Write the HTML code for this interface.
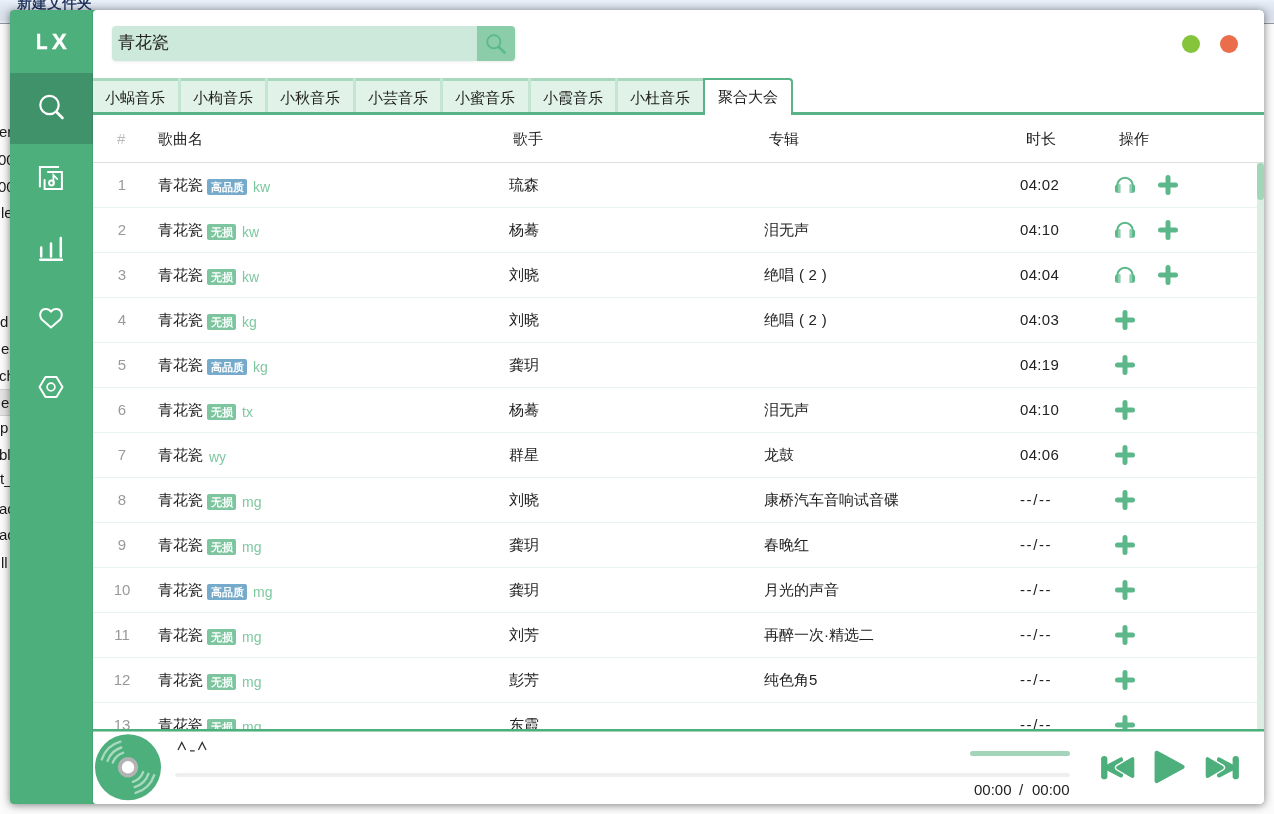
<!DOCTYPE html>
<html><head><meta charset="utf-8"><style>
*{box-sizing:border-box}
html,body{margin:0;padding:0;width:1274px;height:814px;overflow:hidden;background:#fbfbfb;font-family:"Liberation Sans",sans-serif;}
.strip{will-change:transform;position:absolute;left:0;top:0;width:1274px;height:24px;background:linear-gradient(#ebf1f9 0px,#e3eaf4 4px,#dce3ee 12px,#d9e0eb 20px,#e4e9f0 22px,#e4e9f0 23px);border-bottom:1px solid #8f98a4}
.strip .t{position:absolute;left:17px;top:-6px;font-size:15px;line-height:17px;color:#0e2450;-webkit-text-stroke:0.3px #0e2450}
.lbg{position:absolute;left:0;top:24px;width:12px;height:780px;background:linear-gradient(90deg,#f4f4f4,#e8e8e8 6px,#c9c9c9 10px)}
.frag{will-change:transform;position:absolute;font-size:15px;color:#1a1a1a;line-height:20px}
.selrow{position:absolute;left:0;top:389px;width:12px;height:27px;background:#e4e4e4;border-top:1px solid #d0d0d0;border-bottom:1px solid #d0d0d0}
.rbg{position:absolute;left:1264px;top:24px;width:10px;height:790px;background:linear-gradient(90deg,#bdbdbd,#e6e6e6 5px,#f5f5f5 10px)}
.bbg{position:absolute;left:0;top:804px;width:1274px;height:10px;background:linear-gradient(#c4c4c4,#e9e9e9 5px,#f8f8f8 10px)}
#win{position:absolute;left:10px;top:10px;width:1254px;height:794px;background:#4daf7c;border-radius:4px;overflow:hidden;box-shadow:0 1px 9px rgba(0,0,0,.5);will-change:transform}
.logo{position:absolute;left:0;top:0;width:83px;height:63px;color:#fff;font-weight:bold;font-size:22px;line-height:63px;-webkit-text-stroke:0.4px #fff}
.nav{position:absolute;left:0;width:83px;height:70px}
.nav.act{background:#40926a}
.nav svg{position:absolute;left:0;top:0}
#main{position:absolute;left:83px;top:0;width:1171px;height:794px;background:#fff;border-radius:4px;overflow:hidden}
/* coordinates inside main are page coords minus (93,10); use wrapper offset */
.pg{position:absolute;left:-93px;top:-10px;width:1274px;height:814px}
.sinput{position:absolute;left:112px;top:26px;width:365px;height:35px;background:#cde9db;border-radius:4px 0 0 4px;box-shadow:0 1px 3px rgba(0,0,0,.08);font-size:17px;color:#222;line-height:34px;padding-left:6px}
.sbtn{position:absolute;left:477px;top:26px;width:38px;height:35px;background:#8bcda8;border-radius:0 4px 4px 0;box-shadow:1px 1px 3px rgba(0,0,0,.08)}
.dot{position:absolute;top:35px;width:18px;height:18px;border-radius:50%}
.tabs{position:absolute;left:93px;top:78px;width:1171px;height:36px}
.tab{position:absolute;top:78px;height:34px;background:#e1f2e8;border-top:3px solid #aad8bf;font-size:15px;color:#222;text-align:center;line-height:33px}
.tsep{position:absolute;top:78px;width:3px;height:34px;background:#c5e5d3}
.tabline{position:absolute;left:93px;top:112px;width:1171px;height:3px;background:#5ab387}
.tact{position:absolute;left:703px;top:78px;width:90px;height:37px;background:#fff;border:2px solid #5ab387;border-bottom:none;border-radius:0 4px 0 0;font-size:15px;color:#222;text-align:center;line-height:33px}
.th{position:absolute;top:129px;font-size:15px;color:#222;line-height:20px}
.hline{position:absolute;left:93px;top:162px;width:1171px;height:1px;background:#dedede}
.row{position:absolute;left:93px;width:1164px;height:45px}
.rl{position:absolute;left:0;top:0;width:1164px;height:1px;background:#e8f3ee}
.c{position:absolute;top:0px;height:45px;line-height:45px;font-size:15px;color:#222;white-space:nowrap}
.num{left:0;width:58px;text-align:center;color:#999;padding-left:0}
.name{left:65px}
.singer{left:416px}
.album{left:671px}
.dur{left:927px}
.badge{display:inline-block;vertical-align:top;margin-top:17px;margin-left:4px;height:16px;line-height:16px;font-size:11px;font-weight:bold;color:#fff;border-radius:2px;padding:0 3.5px}
.bq{background:#76aacb}
.bl{background:#7cc59e}
.src{font-size:14px;color:#7ec8a0;margin-left:6px;display:inline-block;vertical-align:top;margin-top:2.5px}
.op{position:absolute;top:13px;margin-left:-93px}
.op svg{display:block}
.sbar{position:absolute;left:1257px;top:163px;width:7px;height:566px;background:#dceee4}
.sthumb{position:absolute;left:1257px;top:163px;width:7px;height:37px;background:#a3d6b9;border-radius:4px}
.player{position:absolute;left:93px;top:729px;width:1171px;height:75px;background:#fff;border-top:2px solid #4daf7c;box-shadow:inset 0 1px 0 rgba(77,175,124,.55)}
.ptxt{position:absolute;left:177px;top:737px;font-size:15px;color:#333}
.prog{position:absolute;left:175px;top:773px;width:895px;height:4px;background:#efefef;border-radius:2px}
.vol{position:absolute;left:970px;top:751px;width:100px;height:5px;background:#a3d5bb;border-radius:3px}
.time{position:absolute;left:974px;top:781px;font-size:15px;color:#222;line-height:18px}
</style></head><body>
<div class="strip"><div class="t">新建文件夹</div></div>
<div class="selrow"></div>
<div class="frag" style="top:121.8px;left:-1.5px">er</div><div class="frag" style="top:150.2px;left:-2.5px">00</div><div class="frag" style="top:177.2px;left:-2.5px">00</div><div class="frag" style="top:203.2px;left:0.5px">le</div><div class="frag" style="top:312.2px;left:0.3px">d</div><div class="frag" style="top:338.8px;left:1px">e</div><div class="frag" style="top:365.6px;left:-1.5px">ch</div><div class="frag" style="top:392.8px;left:1px">e</div><div class="frag" style="top:418.2px;left:0px">p</div><div class="frag" style="top:444.8px;left:-1px">bl</div><div class="frag" style="top:468.8px;left:0px">t_</div><div class="frag" style="top:499.4px;left:-1px">ac</div><div class="frag" style="top:525.3px;left:-1px">ac</div><div class="frag" style="top:552.6px;left:0.5px">ll</div>

<div id="win">
 <div class="logo"><span style="position:absolute;left:26px;top:0;display:inline-block;transform:scaleX(.86);transform-origin:0 0">L</span><span style="position:absolute;left:42px;top:0">X</span></div>
 <div class="nav act" style="top:63px;height:71px"><svg width="83" height="70" viewBox="0 0 83 70"><circle cx="39.5" cy="32" r="9.2" fill="none" stroke="#fff" stroke-width="2.2"/><path d="M46.5 39 L52.5 45" stroke="#fff" stroke-width="2.6" stroke-linecap="round"/></svg></div>
 <div class="nav" style="top:133px"><svg width="83" height="70" viewBox="0 0 83 70"><path d="M29.9 43.5 V23.9 H48.2" fill="none" stroke="#fff" stroke-width="2" stroke-linecap="round"/><path d="M34.6 37 V46 H51.9 V28.9 H38" fill="none" stroke="#fff" stroke-width="2" stroke-linecap="round"/><circle cx="41.5" cy="40" r="2.4" fill="none" stroke="#fff" stroke-width="2"/><path d="M43.4 40 V32 L47.2 36" fill="none" stroke="#fff" stroke-width="1.8" stroke-linecap="round"/></svg></div>
 <div class="nav" style="top:203px"><svg width="83" height="70" viewBox="0 0 83 70"><path d="M31.2 34.5V43.5M41 30.5V43.5M50.8 25V43.5M30.3 46.7H51.9" fill="none" stroke="#fff" stroke-width="2.5" stroke-linecap="round"/></svg></div>
 <div class="nav" style="top:273px"><svg width="83" height="70" viewBox="0 0 83 70"><path d="M41 44.6 L33 37.6 C28.2 33.3 30 26 35.8 25.9 C38.2 25.85 39.9 27.2 41 28.8 C42.1 27.2 43.8 25.85 46.2 25.9 C52 26 53.8 33.3 49 37.6 Z" fill="none" stroke="#fff" stroke-width="2" stroke-linejoin="round"/></svg></div>
 <div class="nav" style="top:343px"><svg width="83" height="70" viewBox="0 0 83 70"><path d="M35.5 24 H46.5 L52.5 34 L46.5 44 H35.5 L29.5 34 Z" fill="none" stroke="#fff" stroke-width="2" stroke-linejoin="round"/><circle cx="41" cy="34" r="3.9" fill="none" stroke="#fff" stroke-width="1.7"/></svg></div>
 <div style="position:absolute;left:82px;top:0;width:1px;height:794px;background:rgba(0,0,0,.07)"></div>
 <div id="main"><div class="pg">
  <div class="sinput">青花瓷</div>
  <div class="sbtn"><svg width="38" height="35" viewBox="0 0 38 35"><circle cx="16.8" cy="15.8" r="6.6" fill="none" stroke="#5cb98a" stroke-width="1.8"/><path d="M21.8 21 L27.5 26.5" stroke="#5cb98a" stroke-width="2.6" stroke-linecap="round"/></svg></div>
  <div class="dot" style="left:1181.5px;background:#85c43b"></div>
  <div class="dot" style="left:1220px;background:#ea6e4b"></div>
  <div class="tab" style="left:93.0px;width:84.5px">小蜗音乐</div><div class="tsep" style="left:177.5px"></div><div class="tab" style="left:180.5px;width:84.5px">小枸音乐</div><div class="tsep" style="left:265.0px"></div><div class="tab" style="left:268.0px;width:84.5px">小秋音乐</div><div class="tsep" style="left:352.5px"></div><div class="tab" style="left:355.5px;width:84.5px">小芸音乐</div><div class="tsep" style="left:440.0px"></div><div class="tab" style="left:443.0px;width:84.5px">小蜜音乐</div><div class="tsep" style="left:527.5px"></div><div class="tab" style="left:530.5px;width:84.5px">小霞音乐</div><div class="tsep" style="left:615.0px"></div><div class="tab" style="left:618.0px;width:84.5px">小杜音乐</div><div class="tsep" style="left:702.5px"></div>
  <div class="tabline"></div>
  <div class="tact">聚合大会</div>
  <div class="th" style="left:117px;color:#bbb">#</div>
  <div class="th" style="left:158px">歌曲名</div>
  <div class="th" style="left:513px">歌手</div>
  <div class="th" style="left:769px">专辑</div>
  <div class="th" style="left:1026px">时长</div>
  <div class="th" style="left:1119px">操作</div>
  <div class="hline"></div>
  <div class="row" style="top:162px">
<div class="c num">1</div>
<div class="c name">青花瓷<span class="badge bq">高品质</span><span class="src">kw</span></div>
<div class="c singer">琉森</div>
<div class="c album"></div>
<div class="c dur" style="letter-spacing:0.3px">04:02</div>
<div class="op" style="left:1114px"><svg class="hp" width="22" height="19" viewBox="0 0 22 19"><path d="M3.3 10.5 A7.7 7.7 0 0 1 18.7 10.5" fill="none" stroke="#5cb88a" stroke-width="2.1"/><path d="M1 11.5 Q1 9.5 3 9.5 H6.3 V17.8 H3 Q1 17.8 1 15.8 Z" fill="#5cb88a"/><rect x="3.9" y="9.5" width="2.4" height="8.3" fill="#8fd0ad"/><path d="M21 11.5 Q21 9.5 19 9.5 H15.7 V17.8 H19 Q21 17.8 21 15.8 Z" fill="#5cb88a"/><rect x="15.7" y="9.5" width="2.4" height="8.3" fill="#8fd0ad"/></svg></div><div class="op" style="left:1158px"><svg class="pl" width="20" height="20" viewBox="0 0 20 20"><path d="M10 2.5V17.5M2.5 10H17.5" stroke="#5cb88a" stroke-width="5" stroke-linecap="round"/></svg></div>
</div>
<div class="row" style="top:207px"><div class="rl"></div>
<div class="c num">2</div>
<div class="c name">青花瓷<span class="badge bl">无损</span><span class="src">kw</span></div>
<div class="c singer">杨蓦</div>
<div class="c album">泪无声</div>
<div class="c dur" style="letter-spacing:0.3px">04:10</div>
<div class="op" style="left:1114px"><svg class="hp" width="22" height="19" viewBox="0 0 22 19"><path d="M3.3 10.5 A7.7 7.7 0 0 1 18.7 10.5" fill="none" stroke="#5cb88a" stroke-width="2.1"/><path d="M1 11.5 Q1 9.5 3 9.5 H6.3 V17.8 H3 Q1 17.8 1 15.8 Z" fill="#5cb88a"/><rect x="3.9" y="9.5" width="2.4" height="8.3" fill="#8fd0ad"/><path d="M21 11.5 Q21 9.5 19 9.5 H15.7 V17.8 H19 Q21 17.8 21 15.8 Z" fill="#5cb88a"/><rect x="15.7" y="9.5" width="2.4" height="8.3" fill="#8fd0ad"/></svg></div><div class="op" style="left:1158px"><svg class="pl" width="20" height="20" viewBox="0 0 20 20"><path d="M10 2.5V17.5M2.5 10H17.5" stroke="#5cb88a" stroke-width="5" stroke-linecap="round"/></svg></div>
</div>
<div class="row" style="top:252px"><div class="rl"></div>
<div class="c num">3</div>
<div class="c name">青花瓷<span class="badge bl">无损</span><span class="src">kw</span></div>
<div class="c singer">刘晓</div>
<div class="c album">绝唱<span style="margin-left:5px">(</span><span style="margin-left:4.5px">2</span><span style="margin-left:5px">)</span></div>
<div class="c dur" style="letter-spacing:0.3px">04:04</div>
<div class="op" style="left:1114px"><svg class="hp" width="22" height="19" viewBox="0 0 22 19"><path d="M3.3 10.5 A7.7 7.7 0 0 1 18.7 10.5" fill="none" stroke="#5cb88a" stroke-width="2.1"/><path d="M1 11.5 Q1 9.5 3 9.5 H6.3 V17.8 H3 Q1 17.8 1 15.8 Z" fill="#5cb88a"/><rect x="3.9" y="9.5" width="2.4" height="8.3" fill="#8fd0ad"/><path d="M21 11.5 Q21 9.5 19 9.5 H15.7 V17.8 H19 Q21 17.8 21 15.8 Z" fill="#5cb88a"/><rect x="15.7" y="9.5" width="2.4" height="8.3" fill="#8fd0ad"/></svg></div><div class="op" style="left:1158px"><svg class="pl" width="20" height="20" viewBox="0 0 20 20"><path d="M10 2.5V17.5M2.5 10H17.5" stroke="#5cb88a" stroke-width="5" stroke-linecap="round"/></svg></div>
</div>
<div class="row" style="top:297px"><div class="rl"></div>
<div class="c num">4</div>
<div class="c name">青花瓷<span class="badge bl">无损</span><span class="src">kg</span></div>
<div class="c singer">刘晓</div>
<div class="c album">绝唱<span style="margin-left:5px">(</span><span style="margin-left:4.5px">2</span><span style="margin-left:5px">)</span></div>
<div class="c dur" style="letter-spacing:0.3px">04:03</div>
<div class="op" style="left:1115px"><svg class="pl" width="20" height="20" viewBox="0 0 20 20"><path d="M10 2.5V17.5M2.5 10H17.5" stroke="#5cb88a" stroke-width="5" stroke-linecap="round"/></svg></div>
</div>
<div class="row" style="top:342px"><div class="rl"></div>
<div class="c num">5</div>
<div class="c name">青花瓷<span class="badge bq">高品质</span><span class="src">kg</span></div>
<div class="c singer">龚玥</div>
<div class="c album"></div>
<div class="c dur" style="letter-spacing:0.3px">04:19</div>
<div class="op" style="left:1115px"><svg class="pl" width="20" height="20" viewBox="0 0 20 20"><path d="M10 2.5V17.5M2.5 10H17.5" stroke="#5cb88a" stroke-width="5" stroke-linecap="round"/></svg></div>
</div>
<div class="row" style="top:387px"><div class="rl"></div>
<div class="c num">6</div>
<div class="c name">青花瓷<span class="badge bl">无损</span><span class="src">tx</span></div>
<div class="c singer">杨蓦</div>
<div class="c album">泪无声</div>
<div class="c dur" style="letter-spacing:0.3px">04:10</div>
<div class="op" style="left:1115px"><svg class="pl" width="20" height="20" viewBox="0 0 20 20"><path d="M10 2.5V17.5M2.5 10H17.5" stroke="#5cb88a" stroke-width="5" stroke-linecap="round"/></svg></div>
</div>
<div class="row" style="top:432px"><div class="rl"></div>
<div class="c num">7</div>
<div class="c name">青花瓷<span class="src">wy</span></div>
<div class="c singer">群星</div>
<div class="c album">龙鼓</div>
<div class="c dur" style="letter-spacing:0.3px">04:06</div>
<div class="op" style="left:1115px"><svg class="pl" width="20" height="20" viewBox="0 0 20 20"><path d="M10 2.5V17.5M2.5 10H17.5" stroke="#5cb88a" stroke-width="5" stroke-linecap="round"/></svg></div>
</div>
<div class="row" style="top:477px"><div class="rl"></div>
<div class="c num">8</div>
<div class="c name">青花瓷<span class="badge bl">无损</span><span class="src">mg</span></div>
<div class="c singer">刘晓</div>
<div class="c album">康桥汽车音响试音碟</div>
<div class="c dur" style="letter-spacing:1.6px">--/--</div>
<div class="op" style="left:1115px"><svg class="pl" width="20" height="20" viewBox="0 0 20 20"><path d="M10 2.5V17.5M2.5 10H17.5" stroke="#5cb88a" stroke-width="5" stroke-linecap="round"/></svg></div>
</div>
<div class="row" style="top:522px"><div class="rl"></div>
<div class="c num">9</div>
<div class="c name">青花瓷<span class="badge bl">无损</span><span class="src">mg</span></div>
<div class="c singer">龚玥</div>
<div class="c album">春晚红</div>
<div class="c dur" style="letter-spacing:1.6px">--/--</div>
<div class="op" style="left:1115px"><svg class="pl" width="20" height="20" viewBox="0 0 20 20"><path d="M10 2.5V17.5M2.5 10H17.5" stroke="#5cb88a" stroke-width="5" stroke-linecap="round"/></svg></div>
</div>
<div class="row" style="top:567px"><div class="rl"></div>
<div class="c num">10</div>
<div class="c name">青花瓷<span class="badge bq">高品质</span><span class="src">mg</span></div>
<div class="c singer">龚玥</div>
<div class="c album">月光的声音</div>
<div class="c dur" style="letter-spacing:1.6px">--/--</div>
<div class="op" style="left:1115px"><svg class="pl" width="20" height="20" viewBox="0 0 20 20"><path d="M10 2.5V17.5M2.5 10H17.5" stroke="#5cb88a" stroke-width="5" stroke-linecap="round"/></svg></div>
</div>
<div class="row" style="top:612px"><div class="rl"></div>
<div class="c num">11</div>
<div class="c name">青花瓷<span class="badge bl">无损</span><span class="src">mg</span></div>
<div class="c singer">刘芳</div>
<div class="c album">再醉一次·精选二</div>
<div class="c dur" style="letter-spacing:1.6px">--/--</div>
<div class="op" style="left:1115px"><svg class="pl" width="20" height="20" viewBox="0 0 20 20"><path d="M10 2.5V17.5M2.5 10H17.5" stroke="#5cb88a" stroke-width="5" stroke-linecap="round"/></svg></div>
</div>
<div class="row" style="top:657px"><div class="rl"></div>
<div class="c num">12</div>
<div class="c name">青花瓷<span class="badge bl">无损</span><span class="src">mg</span></div>
<div class="c singer">彭芳</div>
<div class="c album">纯色角5</div>
<div class="c dur" style="letter-spacing:1.6px">--/--</div>
<div class="op" style="left:1115px"><svg class="pl" width="20" height="20" viewBox="0 0 20 20"><path d="M10 2.5V17.5M2.5 10H17.5" stroke="#5cb88a" stroke-width="5" stroke-linecap="round"/></svg></div>
</div>
<div class="row" style="top:702px"><div class="rl"></div>
<div class="c num">13</div>
<div class="c name">青花瓷<span class="badge bl">无损</span><span class="src">mg</span></div>
<div class="c singer">东霞</div>
<div class="c album"></div>
<div class="c dur" style="letter-spacing:1.6px">--/--</div>
<div class="op" style="left:1115px"><svg class="pl" width="20" height="20" viewBox="0 0 20 20"><path d="M10 2.5V17.5M2.5 10H17.5" stroke="#5cb88a" stroke-width="5" stroke-linecap="round"/></svg></div>
</div>
  <div class="sbar"></div><div class="sthumb"></div>
  <div class="player"></div>
  <svg style="position:absolute;left:93px;top:732px" width="70" height="72" viewBox="0 0 70 72">
   <circle cx="35" cy="35.3" r="33" fill="#4daf7c"/>
   <circle cx="35" cy="35.3" r="8.2" fill="#fff" stroke="#b3b3b3" stroke-width="4"/>
   <g fill="none" stroke="#a9d9bf" stroke-width="2.4" stroke-linecap="round">
    <path d="M8.80 27.40 A27.4 27.4 0 0 1 27.40 9.70"/>
    <path d="M14.60 28.80 A21.2 21.2 0 0 1 28.30 15.50"/>
    <path d="M19.90 30.50 A15.6 15.6 0 0 1 30.10 20.80"/>
    <path d="M61.20 43.20 A27.4 27.4 0 0 1 42.60 60.90"/>
    <path d="M55.40 41.80 A21.2 21.2 0 0 1 41.70 55.10"/>
    <path d="M50.10 40.10 A15.6 15.6 0 0 1 39.90 49.80"/>
   </g>
  </svg>
  <svg style="position:absolute;left:176px;top:740px" width="34" height="14" viewBox="0 0 34 14"><path d="M2 10 L5.8 2.5 L9.6 10 M22.4 10 L26.2 2.5 L30 10 M14 10.8 H18.7" fill="none" stroke="#333" stroke-width="1.3"/></svg>
  <div class="prog"></div>
  <div class="vol"></div>
  <div class="time"><span style="position:absolute;left:0">00:00</span><span style="position:absolute;left:45px">/</span><span style="position:absolute;left:58px">00:00</span></div>
  <svg style="position:absolute;left:1096px;top:748px" width="150" height="40" viewBox="0 0 150 40">
   <g>
    <rect x="5.1" y="7.9" width="6.3" height="23.4" rx="3.15" fill="#4daf7c"/>
    <path d="M9 19.5 L25.2 11.2 L25.2 27.8 Z" fill="#4daf7c" stroke="#4daf7c" stroke-width="3.6" stroke-linejoin="round"/>
    <path d="M22 19.6 L36.5 11 L36.5 28.2 Z" fill="#fff" stroke="#fff" stroke-width="6.4" stroke-linejoin="round"/>
    <path d="M22 19.6 L36.5 11 L36.5 28.2 Z" fill="#4daf7c" stroke="#4daf7c" stroke-width="3.6" stroke-linejoin="round"/>
   </g>
   <g transform="translate(148 0) scale(-1 1)">
    <rect x="5.1" y="7.9" width="6.3" height="23.4" rx="3.15" fill="#4daf7c"/>
    <path d="M9 19.5 L25.2 11.2 L25.2 27.8 Z" fill="#4daf7c" stroke="#4daf7c" stroke-width="3.6" stroke-linejoin="round"/>
    <path d="M22 19.6 L36.5 11 L36.5 28.2 Z" fill="#fff" stroke="#fff" stroke-width="6.4" stroke-linejoin="round"/>
    <path d="M22 19.6 L36.5 11 L36.5 28.2 Z" fill="#4daf7c" stroke="#4daf7c" stroke-width="3.6" stroke-linejoin="round"/>
   </g>
   <path d="M60.8 4.9 L86.3 18.9 L60.8 32.9 Z" fill="#4daf7c" stroke="#4daf7c" stroke-width="4.5" stroke-linejoin="round"/>
  </svg>
 </div></div>
</div>
</body></html>
